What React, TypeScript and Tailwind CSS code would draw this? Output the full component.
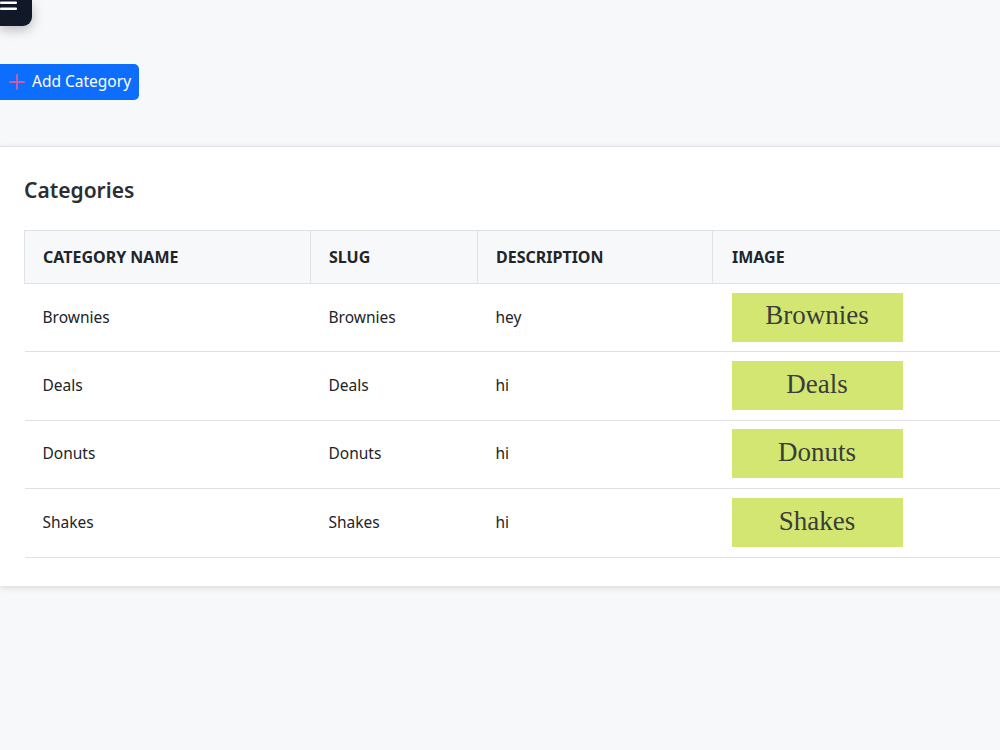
const ROWS = [
  { name: 'Brownies', slug: 'Brownies', description: 'hey' },
  { name: 'Deals', slug: 'Deals', description: 'hi' },
  { name: 'Donuts', slug: 'Donuts', description: 'hi' },
  { name: 'Shakes', slug: 'Shakes', description: 'hi' },
];

export default function App() {
  return (
    <div
      className="relative w-[1000px] h-[750px] overflow-hidden bg-[#f7f8fa] text-[#212529]"
      style={{ fontFamily: '"Noto Sans", "Open Sans", sans-serif' }}
    >
      {/* menu toggle, mostly scrolled off the top */}
      <button className="absolute left-0 top-0 w-[32px] h-[26px] rounded-br-[9px] bg-[#111827] shadow-[0_4px_12px_rgba(0,0,0,0.25)] z-10">
        <svg width="32" height="26" viewBox="0 0 32 26" className="block">
          <rect x="0" y="1.5" width="17" height="2.5" rx="1" fill="white" />
          <rect x="0" y="7.5" width="17" height="2.5" rx="1" fill="white" />
        </svg>
      </button>

      <div className="pt-[64px]">
        <button className="flex items-center h-[36px] w-[139px] rounded-r-[5px] bg-[#0d6efd] text-white text-[15.5px]">
          <svg width="16" height="16" viewBox="0 0 16 16" className="ml-[9px] mr-[7px]">
            <path d="M8 1v14M1 8h14" stroke="#c45fb0" strokeWidth="2" strokeLinecap="round" />
          </svg>
          <span className="leading-none pb-[1px]">Add Category</span>
        </button>
      </div>

      <div className="mt-[46px] w-[1140px] bg-white border-t border-[#dee2e6] shadow-[0_2px_6px_rgba(0,0,0,0.12)] pt-[29px] pb-[28px] pl-[24px]">
        <h2 className="text-[21px] leading-[28px] font-semibold text-[#2b2f33] mb-[26px]">Categories</h2>

        <table className="w-[1100px] border-collapse table-fixed">
          <thead>
            <tr className="bg-[#f7f8fa] h-[53px]">
              <th className="w-[286px] border border-[#dee2e6] text-left pl-[18px] text-[16px] font-bold">CATEGORY NAME</th>
              <th className="w-[167px] border border-[#dee2e6] text-left pl-[18px] text-[16px] font-bold">SLUG</th>
              <th className="w-[235px] border border-[#dee2e6] text-left pl-[18px] text-[16px] font-bold">DESCRIPTION</th>
              <th className="border border-[#dee2e6] text-left pl-[19px] text-[16px] font-bold">IMAGE</th>
            </tr>
          </thead>
          <tbody>
            {ROWS.map(r => (
              <tr key={r.name} className="h-[68.4px] border-b border-[#dee2e6]">
                <td className="pl-[18px] text-[15.5px] pb-[1px]">{r.name}</td>
                <td className="pl-[18px] text-[15.5px] pb-[1px]">{r.slug}</td>
                <td className="pl-[18px] text-[15.5px] pb-[1px]">{r.description}</td>
                <td className="pl-[19px] pb-[1px]">
                  <div
                    className="w-[171px] h-[49px] bg-[#d3e671] flex items-center justify-center text-[27px] text-[#3a3d3a] pb-[3px]"
                    style={{ fontFamily: '"Liberation Serif", "DejaVu Serif", serif' }}
                  >
                    {r.name}
                  </div>
                </td>
              </tr>
            ))}
          </tbody>
        </table>
      </div>
    </div>
  );
}
